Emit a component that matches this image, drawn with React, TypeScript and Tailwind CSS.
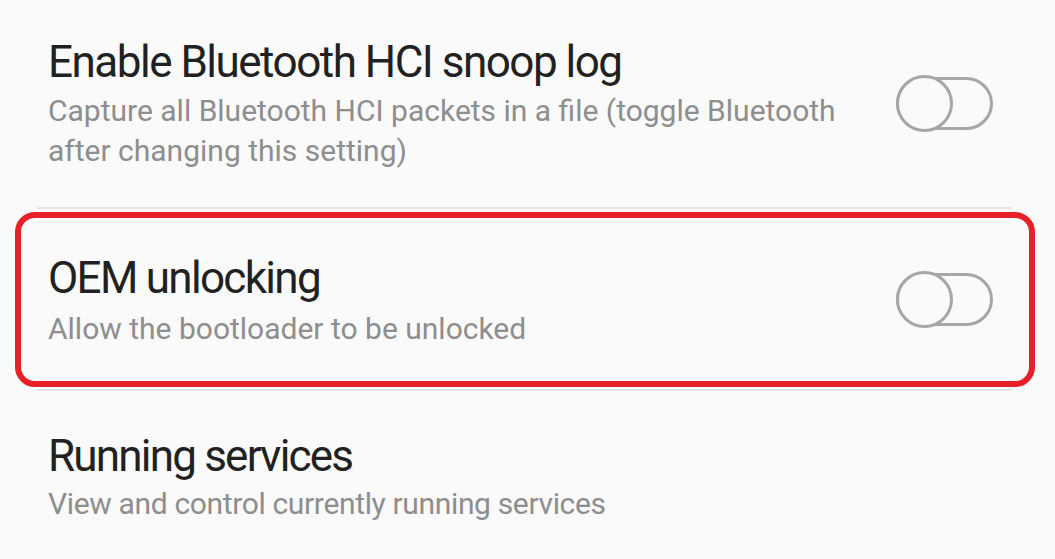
import React from "react";

function Toggle() {
  return (
    <div className="relative h-[57px] w-[97px] shrink-0">
      <div className="absolute left-0 top-[2px] h-[53px] w-[97px] rounded-full border-[3px] border-[#a6a6a6]" />
      <div className="absolute left-0 top-0 h-[57px] w-[57px] rounded-full border-[3px] border-[#a6a6a6] bg-[#fafafa]" />
    </div>
  );
}

export default function App() {
  const font = { fontFamily: 'Roboto, "Liberation Sans", sans-serif' };
  return (
    <div className="h-[559px] w-[1055px] overflow-hidden bg-[#fafafa]" style={font}>
      {/* Row 1 */}
      <div className="flex h-[207px] items-center pl-[48px] pr-[62px]">
        <div className="flex-1 self-start pt-[36px]">
          <div className="text-[44px] leading-[52px] tracking-[-1.5px] text-[#212121]">Enable Bluetooth HCI snoop log</div>
          <div className="mt-[3px] text-[30px] leading-[40px] text-[#8e8e8e]">
            Capture all Bluetooth HCI packets in a file (toggle Bluetooth
            <br />
            after changing this setting)
          </div>
        </div>
        <Toggle />
      </div>
      <div className="ml-[37px] mr-[43px] h-[2px] bg-[#e6e6e6]" />

      {/* Highlighted row */}
      <div className="ml-[15px] mr-[20px] mt-[3px] flex h-[175px] items-center rounded-[20px] border-[6px] border-[#e8202a] pl-[27px] pr-[36px] pt-[3px]">
        <div className="flex-1">
          <div className="text-[44px] leading-[52px] tracking-[-1.7px] text-[#212121]">OEM unlocking</div>
          <div className="mt-[4px] text-[30px] leading-[42px] text-[#8e8e8e]">Allow the bootloader to be unlocked</div>
        </div>
        <div className="-mt-[3px]">
          <Toggle />
        </div>
      </div>
      <div className="ml-[37px] mr-[43px] mt-[2px] h-[2px] bg-[#e6e6e6]" />

      {/* Row 3 */}
      <div className="pl-[48px] pt-[39px]">
        <div className="text-[44px] leading-[52px] tracking-[-1.8px] text-[#212121]">Running services</div>
        <div className="mt-[1px] text-[30px] leading-[42px] tracking-[-0.35px] text-[#8e8e8e]">View and control currently running services</div>
      </div>
    </div>
  );
}
